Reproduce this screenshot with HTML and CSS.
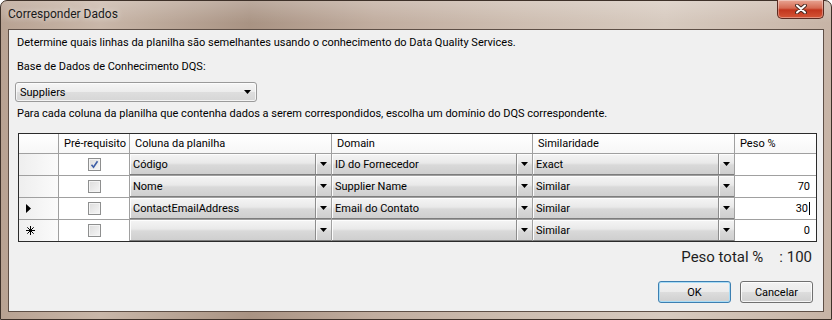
FILE: index.html
```html
<!DOCTYPE html>
<html>
<head>
    <title>Corresponder Dados</title>
    <link rel="stylesheet" href="styles.css">
</head>
<body>
    <div class="window">
        <div class="titlebar">
            <span class="title">Corresponder Dados</span>
            <div class="close">
                <svg width="12" height="10" viewBox="0 0 12 10">
                    <path d="M2 1.5l8 7M10 1.5l-8 7" stroke="#4a2a22" stroke-width="4" stroke-linecap="round"/>
                    <path d="M2 1.5l8 7M10 1.5l-8 7" stroke="#fff" stroke-width="2" stroke-linecap="round"/>
                </svg>
            </div>
        </div>

        <div class="client">
            <p class="line">Determine quais linhas da planilha são semelhantes usando o conhecimento do Data Quality Services.</p>
            <p class="line field-label">Base de Dados de Conhecimento DQS:</p>

            <div class="kb-select">
                <span>Suppliers</span>
                <svg class="arrow" width="7" height="4" viewBox="0 0 7 4"><path d="M0 0h7L3.5 4z"/></svg>
            </div>

            <p class="line help">Para cada coluna da planilha que contenha dados a serem correspondidos, escolha um domínio do DQS correspondente.</p>

            <div class="grid">
                <div class="hdr"></div>
                <div class="hdr">Pré-requisito</div>
                <div class="hdr">Coluna da planilha</div>
                <div class="hdr">Domain</div>
                <div class="hdr">Similaridade</div>
                <div class="hdr">Peso %</div>

                <!-- row 1 -->
                <div class="rowhead"></div>
                <div class="check-cell"><span class="checkbox checked"><svg width="9" height="9" viewBox="0 0 9 9"><path d="M1.5 4.8l2 2.4 4-6" fill="none" stroke="#3d5ea6" stroke-width="1.6"/></svg></span></div>
                <div class="combo"><span class="combo-text">Código</span><span class="combo-btn"><svg width="7" height="4" viewBox="0 0 7 4"><path d="M0 0h7L3.5 4z"/></svg></span></div>
                <div class="combo"><span class="combo-text">ID do Fornecedor</span><span class="combo-btn"><svg width="7" height="4" viewBox="0 0 7 4"><path d="M0 0h7L3.5 4z"/></svg></span></div>
                <div class="combo"><span class="combo-text">Exact</span><span class="combo-btn"><svg width="7" height="4" viewBox="0 0 7 4"><path d="M0 0h7L3.5 4z"/></svg></span></div>
                <div class="num-cell"></div>

                <!-- row 2 -->
                <div class="rowhead"></div>
                <div class="check-cell"><span class="checkbox"></span></div>
                <div class="combo"><span class="combo-text">Nome</span><span class="combo-btn"><svg width="7" height="4" viewBox="0 0 7 4"><path d="M0 0h7L3.5 4z"/></svg></span></div>
                <div class="combo"><span class="combo-text">Supplier Name</span><span class="combo-btn"><svg width="7" height="4" viewBox="0 0 7 4"><path d="M0 0h7L3.5 4z"/></svg></span></div>
                <div class="combo"><span class="combo-text">Similar</span><span class="combo-btn"><svg width="7" height="4" viewBox="0 0 7 4"><path d="M0 0h7L3.5 4z"/></svg></span></div>
                <div class="num-cell">70</div>

                <!-- row 3 (current) -->
                <div class="rowhead"><svg width="5" height="9" viewBox="0 0 5 9"><path d="M0 0l5 4.5L0 9z"/></svg></div>
                <div class="check-cell"><span class="checkbox"></span></div>
                <div class="combo"><span class="combo-text">ContactEmailAddress</span><span class="combo-btn"><svg width="7" height="4" viewBox="0 0 7 4"><path d="M0 0h7L3.5 4z"/></svg></span></div>
                <div class="combo"><span class="combo-text">Email do Contato</span><span class="combo-btn"><svg width="7" height="4" viewBox="0 0 7 4"><path d="M0 0h7L3.5 4z"/></svg></span></div>
                <div class="combo"><span class="combo-text">Similar</span><span class="combo-btn"><svg width="7" height="4" viewBox="0 0 7 4"><path d="M0 0h7L3.5 4z"/></svg></span></div>
                <div class="num-cell">30<span class="caret"></span></div>

                <!-- new row -->
                <div class="rowhead"><svg width="9" height="9" viewBox="0 0 9 9"><path d="M4.5 0v9M0 4.5h9M1.3 1.3l6.4 6.4M7.7 1.3l-6.4 6.4" stroke="#000" stroke-width="1"/></svg></div>
                <div class="check-cell"><span class="checkbox"></span></div>
                <div class="combo"><span class="combo-text"></span><span class="combo-btn"><svg width="7" height="4" viewBox="0 0 7 4"><path d="M0 0h7L3.5 4z"/></svg></span></div>
                <div class="combo"><span class="combo-text"></span><span class="combo-btn"><svg width="7" height="4" viewBox="0 0 7 4"><path d="M0 0h7L3.5 4z"/></svg></span></div>
                <div class="combo"><span class="combo-text">Similar</span><span class="combo-btn"><svg width="7" height="4" viewBox="0 0 7 4"><path d="M0 0h7L3.5 4z"/></svg></span></div>
                <div class="num-cell">0</div>
            </div>

            <div class="total">
                <span>Peso total %</span>
                <span class="total-value">: 100</span>
            </div>

            <div class="buttons">
                <button class="btn btn-default">OK</button>
                <button class="btn">Cancelar</button>
            </div>
        </div>
    </div>
</body>
</html>
```

FILE: styles.css
```css
body {
    margin: 0;
    font-family: Roboto, "Liberation Sans", sans-serif;
    font-size: 11px;
    color: #000;
    background: #fff;
}

.window {
    box-sizing: border-box;
    width: 832px;
    height: 320px;
    padding: 0 7px 7px 7px;
    border: 1px solid #3e3129;
    border-radius: 7px 7px 0 0;
    display: flex;
    flex-direction: column;
    background:
        linear-gradient(rgba(255, 255, 255, 0.22), rgba(255, 255, 255, 0) 22px),
        linear-gradient(90deg, #b8a292 0%, #c9b7a9 12%, #a99383 30%, #c1ad9f 45%, #cdbdb0 62%, #d7cabf 80%, #c7b4a6 100%);
}

.titlebar {
    height: 28px;
    display: flex;
    justify-content: space-between;
    align-items: flex-start;
}

.title {
    font-size: 12px;
    line-height: 15px;
    padding-top: 6px;
    color: #1a1a1a;
    text-shadow: 0 0 6px rgba(255, 255, 255, 0.8);
}

.close {
    box-sizing: border-box;
    width: 47px;
    height: 19px;
    margin-top: -1px;
    border: 1px solid #5b2b21;
    border-top: none;
    border-radius: 0 0 5px 5px;
    display: flex;
    align-items: center;
    justify-content: center;
    background: linear-gradient(#e8a593 0%, #d56a52 45%, #c2351d 55%, #d45536 100%);
    box-shadow: inset 0 0 0 1px rgba(255, 255, 255, 0.35);
}

.client {
    flex: 1;
    background: #f0f0f0;
    border: 1px solid #5e4f46;
    padding: 6px 0 0 6px;
}

.line {
    margin: 0;
    padding-left: 2px;
    line-height: 14px;
    white-space: nowrap;
}

.field-label {
    margin-top: 10px;
}

.kb-select {
    box-sizing: border-box;
    width: 242px;
    height: 20px;
    margin-top: 8px;
    padding: 0 5px 0 4px;
    border: 1px solid #9a9a9a;
    border-radius: 3px;
    display: flex;
    align-items: center;
    justify-content: space-between;
    background: linear-gradient(#f6f6f6 0%, #ececec 50%, #dedede 51%, #d6d6d6 100%);
    box-shadow: inset 0 0 0 1px rgba(255, 255, 255, 0.7);
}

.help {
    margin-top: 5px;
}

.grid {
    box-sizing: border-box;
    width: 799px;
    margin: 12px 0 0 3px;
    border: 1px solid #2b2b2b;
    background: #a0a0a0;
    display: grid;
    grid-template-columns: 39px 70px 201px 200px 201px 81px;
    grid-template-rows: 19px repeat(4, 21px);
    gap: 1px;
}

.hdr {
    background: linear-gradient(#ffffff, #f7f7f7);
    padding-left: 5px;
    display: flex;
    align-items: center;
    white-space: nowrap;
}

.rowhead {
    background: linear-gradient(90deg, #eeeeee, #fbfbfb);
    display: flex;
    align-items: center;
    padding-left: 7px;
}

.check-cell {
    background: #fff;
    display: flex;
    align-items: center;
    justify-content: center;
}

.checkbox {
    box-sizing: border-box;
    width: 13px;
    height: 13px;
    border: 1px solid #8e8f8f;
    background: linear-gradient(135deg, #dcdcdc, #f6f6f6);
    box-shadow: inset 0 0 0 1px #f4f4f4;
    display: flex;
    align-items: center;
    justify-content: center;
}

.combo {
    display: flex;
    background: linear-gradient(#f5f5f5 0%, #e9e9e9 45%, #d9d9d9 55%, #cfcfcf 100%);
    border-bottom: 1px solid #7d7d7d;
    box-shadow: inset 1px 1px 0 #fdfdfd;
}

.combo-text {
    flex: 1;
    padding-left: 3px;
    display: flex;
    align-items: center;
    white-space: nowrap;
}

.combo-btn {
    width: 15px;
    border-left: 1px solid #8c8c8c;
    box-shadow: inset 1px 0 0 #fafafa;
    display: flex;
    align-items: center;
    justify-content: center;
}

.num-cell {
    background: #fff;
    display: flex;
    align-items: center;
    justify-content: flex-end;
    padding-right: 6px;
}

.caret {
    display: inline-block;
    width: 1px;
    height: 13px;
    margin-left: 1px;
    background: #000;
}

.total {
    display: flex;
    justify-content: flex-end;
    margin: 6px 11px 0 0;
    font-size: 15px;
    line-height: 18px;
    color: #1e1e1e;
}

.total-value {
    margin-left: 16px;
}

.buttons {
    display: flex;
    justify-content: flex-end;
    gap: 9px;
    margin: 15px 10px 0 0;
}

.btn {
    box-sizing: border-box;
    width: 73px;
    height: 22px;
    padding: 0;
    font-family: Roboto, "Liberation Sans", sans-serif;
    font-size: 11px;
    color: #000;
    border: 1px solid #707070;
    border-radius: 3px;
    background: linear-gradient(#f2f2f2 0%, #ebebeb 50%, #dddddd 51%, #cfcfcf 100%);
    box-shadow: inset 0 0 0 1px rgba(255, 255, 255, 0.8);
}

.btn-default {
    border-color: #3c7fb1;
    box-shadow: inset 0 0 0 1px #a9dcf6;
}
```
